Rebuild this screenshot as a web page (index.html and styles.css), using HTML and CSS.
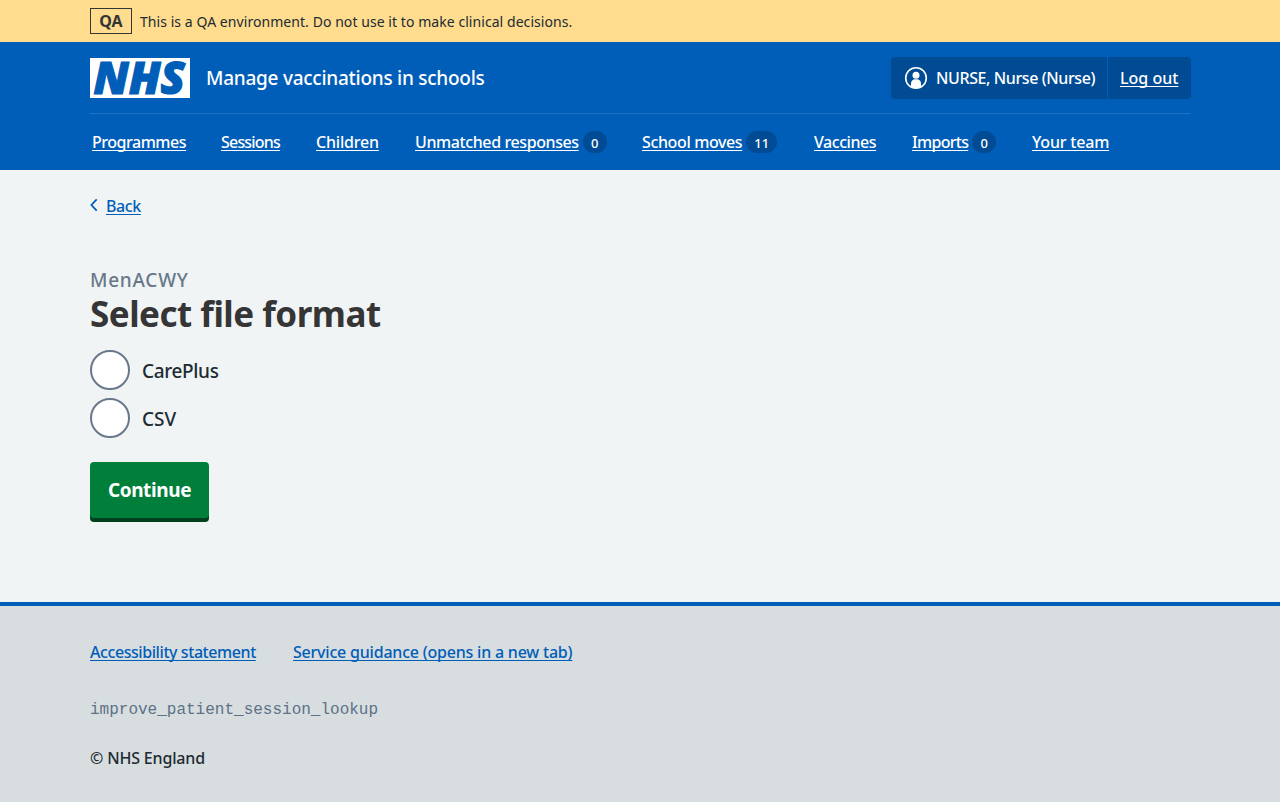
FILE: index.html
```html
<!DOCTYPE html>
<html lang="en">
<head>
<meta charset="utf-8">
<title>Select file format – Manage vaccinations in schools</title>
<link rel="stylesheet" href="styles.css">
</head>
<body>
<div class="environment">
  <div class="container environment-inner">
    <strong class="environment-tag">QA</strong>
    <span class="environment-text">This is a QA environment. Do not use it to make clinical decisions.</span>
  </div>
</div>
<header class="header">
  <div class="container">
    <div class="header-top">
      <svg class="logo" viewBox="0 0 100 40" role="img" aria-label="NHS">
        <rect width="100" height="40" fill="#fff"/>
        <text class="logo-text" x="3.500" y="36.300" textLength="91.500" lengthAdjust="spacingAndGlyphs">NHS</text>
      </svg>
      <span class="service-name">Manage vaccinations in schools</span>
      <div class="account">
        <div class="account-user">
          <svg class="account-icon" viewBox="0 0 24 24" aria-hidden="true">
            <circle cx="12" cy="12" r="10.3" fill="none" stroke="#fff" stroke-width="1.6"/>
            <circle cx="12" cy="9.200" r="3.500" fill="#fff"/>
            <path d="M7 20.500V17.500c0-2.600 1.800-4.200 4-4.200h2c2.200 0 4 1.600 4 4.200v3c-3 2.200-7 2.200-10 0Z" fill="#fff"/>
          </svg>
          <span class="account-name">NURSE, Nurse (Nurse)</span>
        </div>
        <a class="account-logout" href="#">Log out</a>
      </div>
    </div>
    <nav class="nav">
      <div class="nav-item w-programmes"><a href="#">Programmes</a></div>
      <div class="nav-item w-sessions"><a href="#">Sessions</a></div>
      <div class="nav-item w-children"><a href="#">Children</a></div>
      <div class="nav-item w-unmatched"><a href="#">Unmatched responses</a><span class="count">0</span></div>
      <div class="nav-item w-moves"><a href="#">School moves</a><span class="count">11</span></div>
      <div class="nav-item w-vaccines"><a href="#">Vaccines</a></div>
      <div class="nav-item w-imports"><a href="#">Imports</a><span class="count">0</span></div>
      <div class="nav-item w-team"><a href="#">Your team</a></div>
    </nav>
  </div>
</header>
<main class="container main">
  <div class="back">
    <svg class="back-icon" viewBox="0 0 8 14" aria-hidden="true"><path d="M6.700 1.300 1.400 7l5.300 5.700" fill="none" stroke="#005eb8" stroke-width="1.800"/></svg>
    <a href="#">Back</a>
  </div>
  <h1 class="heading"><span class="caption">MenACWY</span><span class="title">Select file format</span></h1>
  <div class="radios">
    <label class="radio"><input type="radio" name="format"><span class="radio-label careplus">CarePlus</span></label>
    <label class="radio"><input type="radio" name="format"><span class="radio-label">CSV</span></label>
  </div>
  <button class="button">Continue</button>
</main>
<footer class="footer">
  <div class="container">
    <div class="footer-links">
      <div class="footer-item"><a class="link-accessibility" href="#">Accessibility statement</a></div>
      <div><a class="link-guidance" href="#">Service guidance (opens in a new tab)</a></div>
    </div>
    <div class="version">improve_patient_session_lookup</div>
    <div class="copyright">© NHS England</div>
  </div>
</footer>
</body>
</html>
```
FILE: styles.css
```css
* { box-sizing: border-box; }
body {
  margin: 0;
  min-height: 802px;
  display: flex;
  flex-direction: column;
  background: #f0f4f5;
  color: #212b32;
  font: 500 16px/24px "Noto Sans", "Open Sans", sans-serif;
  white-space: nowrap;
}
a { color: #005eb8; text-underline-offset: 2px; text-decoration-thickness: 1px; text-decoration-skip-ink: none; }
.container { width: 1100px; margin: 0 auto; }
.environment { background: #ffdc8e; height: 42px; }
.environment-inner { display: flex; align-items: center; height: 42px; gap: 8px; }
.environment-tag { width: 42px; height: 26px; border: 1px solid #353535; text-align: center; font-size: 16px; line-height: 24px; font-weight: 700; color: #353535; }
.environment-text { padding-top: 1px; font-size: 14px; font-weight: 400; letter-spacing: .06px; }
.header { background: #005eb8; height: 128px; color: #fff; }
.header a { color: #fff; }
.header-top { height: 72px; display: flex; align-items: center; border-bottom: 1px solid #1f72c1; }
.logo { width: 100px; height: 40px; overflow: visible; }
.logo-text { font: italic 800 45px "Open Sans", sans-serif; fill: #005eb8; stroke: #005eb8; stroke-width: 1.2px; }
.service-name { font-size: 19px; margin-left: 16px; letter-spacing: -.26px; }
.account { display: flex; width: 300px; height: 42px; margin: 0 -1px 0 auto; background: #004b93; border-radius: 4px; line-height: 42px; }
.account-user { width: 217px; display: flex; align-items: center; padding-left: 13px; border-right: 1px solid #005eb8; }
.account-icon { width: 24px; height: 24px; margin-right: 8px; }
.account-name { letter-spacing: -.4px; }
.account-logout { padding-left: 12px; }
.nav { display: flex; height: 56px; align-items: center; padding-left: 2px; }
.nav-item { display: flex; align-items: center; flex: none; }
.count { height: 22px; min-width: 24px; padding: 1px 8px 0; margin-left: 4px; text-align: center; font-size: 13px; line-height: 22px; letter-spacing: 0; border-radius: 11px; background: #004b93; }
.w-programmes { width: 129px; letter-spacing: -.47px; }
.w-sessions { width: 95px; letter-spacing: -.8px; }
.w-children { width: 99px; letter-spacing: -.2px; }
.w-unmatched { width: 227px; letter-spacing: -.4px; }
.w-moves { width: 172px; letter-spacing: -.37px; }
.w-vaccines { width: 98px; letter-spacing: -.45px; }
.w-imports { width: 120px; letter-spacing: -.7px; }
.w-team { letter-spacing: -.2px; }
.main { flex: 1; padding-top: 24px; }
.back { display: flex; align-items: center; height: 24px; letter-spacing: -.4px; }
.back-icon { width: 8px; height: 14px; margin: 0 8px 2px 0; }
.heading { margin: 48px 0 0; color: #353535; }
.caption { display: block; color: #68788a; font-size: 19px; line-height: 28px; font-weight: 500; letter-spacing: .75px; }
.title { display: block; font-size: 35px; line-height: 40px; font-weight: 700; letter-spacing: -.5px; }
.radios { display: grid; gap: 8px; margin-top: 16px; }
.radio { display: flex; align-items: center; gap: 12px; height: 40px; font-size: 19px; }
.radio-label { padding-top: 2px; }
.careplus { letter-spacing: -.35px; }
.radio input { appearance: none; width: 40px; height: 40px; margin: 0; border: 2px solid #68788a; border-radius: 50%; background: #fff; }
.button { display: block; margin: 24px 0 0; width: 119px; height: 56px; padding: 0; border: 0; border-radius: 4px; background: #007f3b; box-shadow: 0 4px 0 #00401e; color: #fff; font: 700 19px/28px "Noto Sans", sans-serif; letter-spacing: -.4px; }
.footer { height: 200px; padding-top: 34px; background: #d8dde0; border-top: 4px solid #005eb8; }
.footer-links { display: flex; }
.footer-item { width: 203px; }
.link-accessibility { letter-spacing: -.43px; }
.link-guidance { letter-spacing: -.21px; }
.version { margin-top: 34px; color: #5c7286; font: 16px/24px "Liberation Mono", monospace; }
.copyright { margin-top: 24px; letter-spacing: -.17px; }
```
